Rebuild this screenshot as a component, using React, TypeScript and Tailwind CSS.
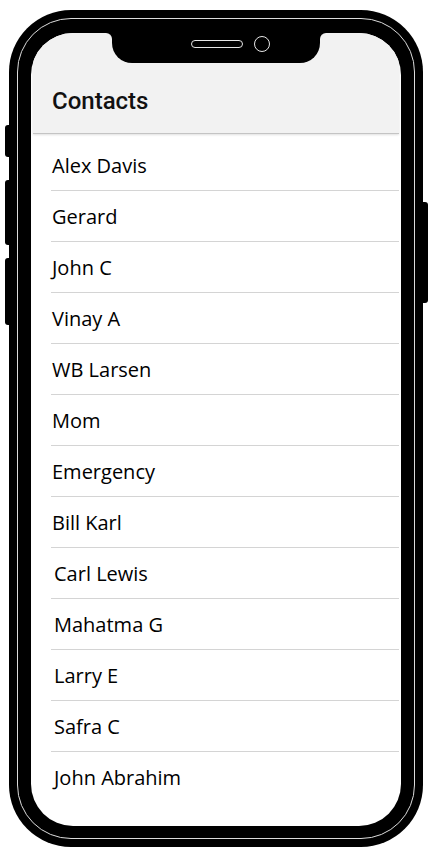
const contacts = [
  "Alex Davis",
  "Gerard",
  "John C",
  "Vinay A",
  "WB Larsen",
  "Mom",
  "Emergency",
  "Bill Karl",
  "Carl Lewis",
  "Mahatma G",
  "Larry E",
  "Safra C",
  "John Abrahim",
];

const Notch = () => {
  return (
    <div className="absolute left-1/2 top-0 z-10 flex h-[30px] w-[208px] -translate-x-1/2 items-center justify-center gap-[11px] rounded-b-[20px] bg-black pb-[9px] pl-[29px]">
      {/* little flares where the notch meets the bezel */}
      <div className="absolute -left-[6px] top-0 h-[6px] w-[6px] bg-black">
        <div className="h-full w-full rounded-tr-[6px] bg-[#f2f2f2]" />
      </div>
      <div className="absolute -right-[6px] top-0 h-[6px] w-[6px] bg-black">
        <div className="h-full w-full rounded-tl-[6px] bg-[#f2f2f2]" />
      </div>
      <span className="h-[8px] w-[52px] rounded-full border border-[#e6e6e6]" />
      <span className="h-[16px] w-[16px] rounded-full border border-[#e6e6e6]" />
    </div>
  );
};

const ContactList = () => {
  return (
    <ul className="ml-[20px] mr-[2px] pt-[6px]">
      {contacts.map((name, i) => (
        <li
          key={name}
          className={
            i === contacts.length - 1
              ? "flex h-[51px] items-center"
              : "flex h-[51px] items-center border-b border-[#d4d4d4]"
          }
        >
          <span className={i > 7 ? "pl-[3px]" : "pl-[1px]"}>{name}</span>
        </li>
      ))}
    </ul>
  );
};

export default function App() {
  return (
    <div className="h-[857px] w-[437px] overflow-hidden bg-white pl-[9px] pt-[10px]">
      <div className="relative h-[837px] w-[414px] rounded-[62px] bg-black p-[8px]">
        {/* side buttons */}
        <div className="absolute -left-[4px] top-[115px] h-[32px] w-[6px] rounded-l-[3px] bg-black" />
        <div className="absolute -left-[4px] top-[170px] h-[65px] w-[6px] rounded-l-[3px] bg-black" />
        <div className="absolute -left-[4px] top-[248px] h-[67px] w-[6px] rounded-l-[3px] bg-black" />
        <div className="absolute -right-[5px] top-[192px] h-[101px] w-[7px] rounded-r-[3px] bg-black" />

        <div className="h-full rounded-[54px] border border-[#dcdcdc] px-[13px] pb-[12px] pt-[14px]">
          <div className="relative h-full overflow-hidden rounded-[42px] bg-white">
            <Notch />
            <header className="mx-[2px] border-b border-[#c4c4c4] bg-[#f2f2f2] pb-[16px] pl-[19px] pt-[52px] shadow-[0_1px_2px_rgba(0,0,0,0.12)]">
              <h1 className="font-['Roboto',sans-serif] text-2xl leading-8 font-medium text-[#111]">
                Contacts
              </h1>
            </header>
            <div className="font-['Open_Sans','Noto_Sans',sans-serif] text-[20px] leading-[27px] text-black">
              <ContactList />
            </div>
          </div>
        </div>
      </div>
    </div>
  );
}
